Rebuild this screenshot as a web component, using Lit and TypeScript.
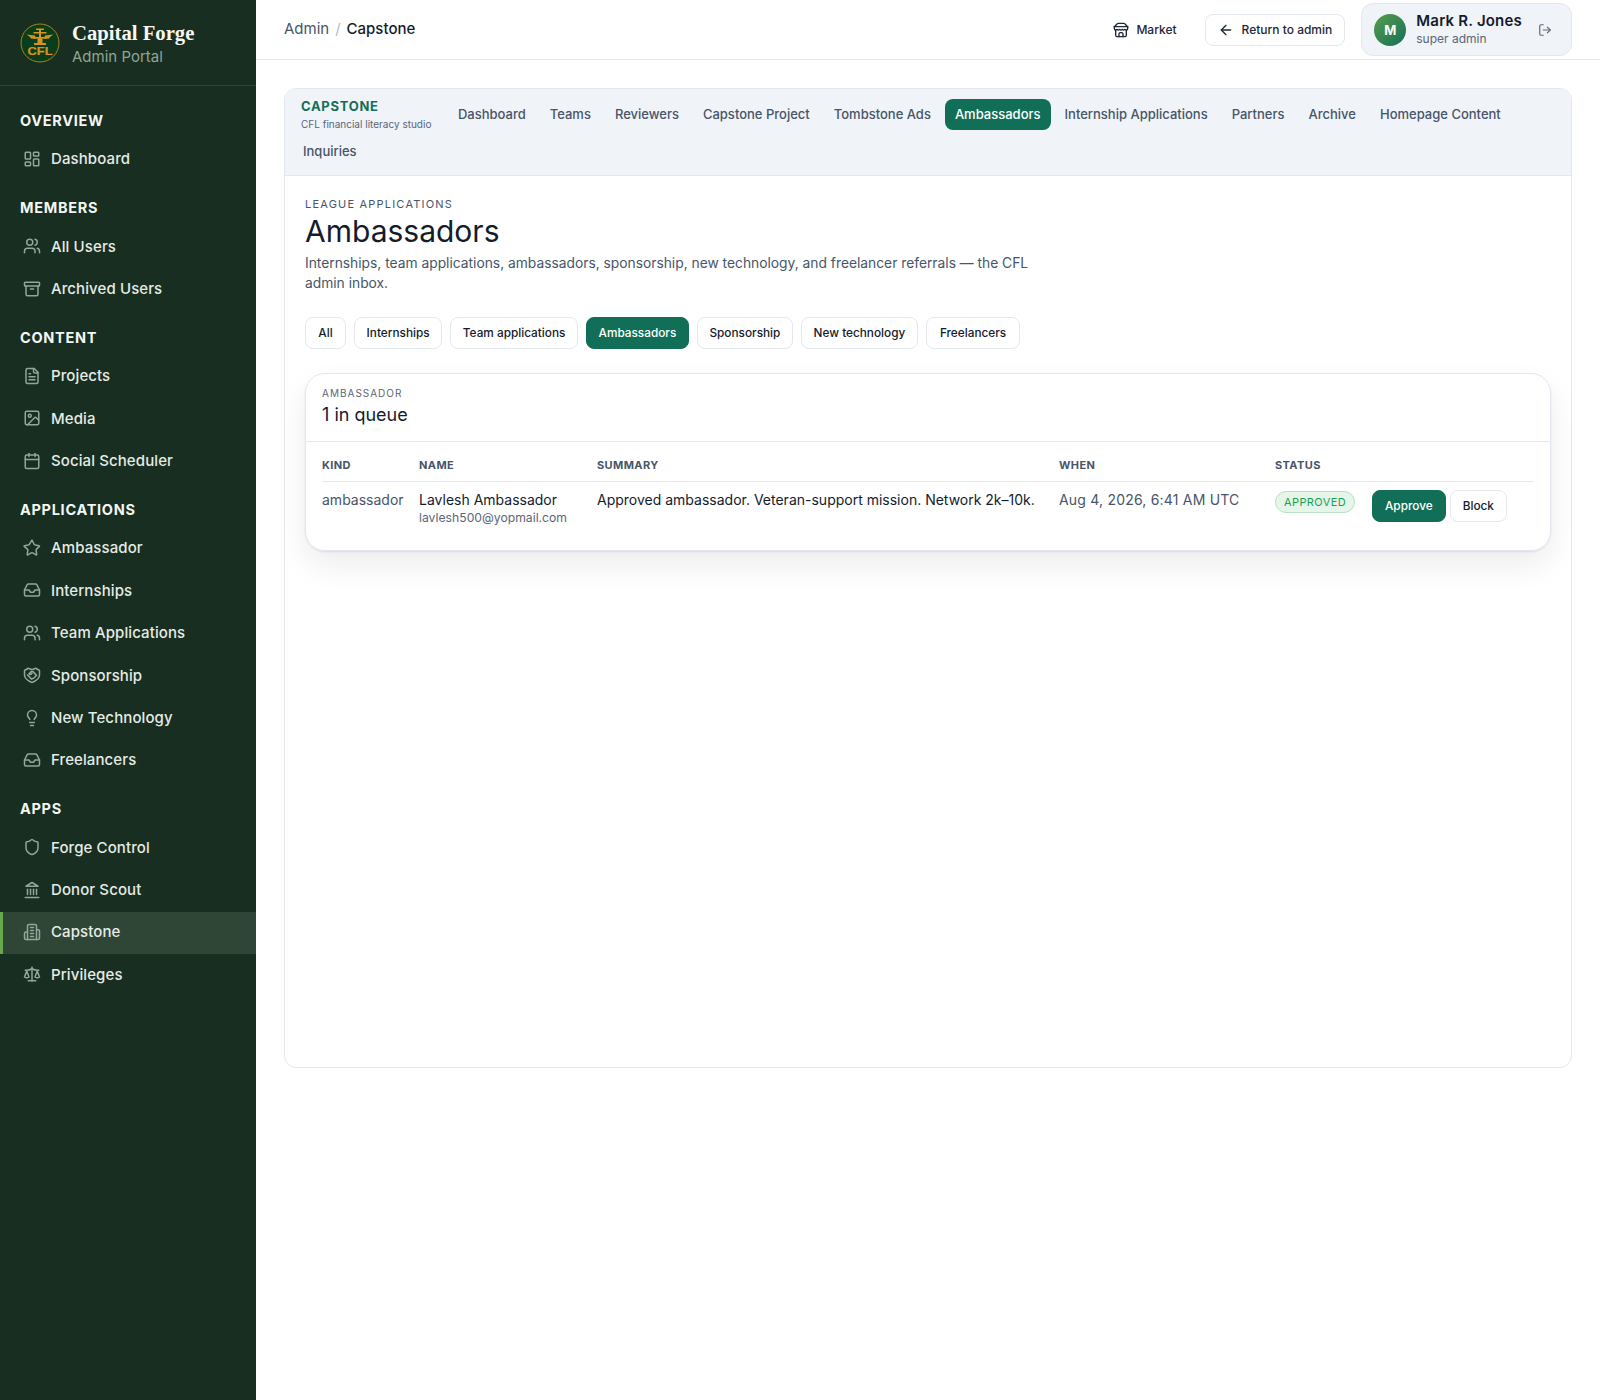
import { css, html, LitElement, svg } from "lit";
import { customElement } from "lit/decorators.js";
import { classMap } from "lit/directives/class-map.js";

const icons: Record<string, ReturnType<typeof svg>> = {
  dashboard: svg`<rect width="7" height="9" x="3" y="3" rx="1"/><rect width="7" height="5" x="14" y="3" rx="1"/><rect width="7" height="9" x="14" y="12" rx="1"/><rect width="7" height="5" x="3" y="16" rx="1"/>`,
  users: svg`<path d="M16 21v-2a4 4 0 0 0-4-4H6a4 4 0 0 0-4 4v2"/><circle cx="9" cy="7" r="4"/><path d="M22 21v-2a4 4 0 0 0-3-3.87"/><path d="M16 3.13a4 4 0 0 1 0 7.75"/>`,
  archive: svg`<rect width="20" height="5" x="2" y="3" rx="1"/><path d="M4 8v11a2 2 0 0 0 2 2h12a2 2 0 0 0 2-2V8"/><path d="M10 12h4"/>`,
  file: svg`<path d="M15 2H6a2 2 0 0 0-2 2v16a2 2 0 0 0 2 2h12a2 2 0 0 0 2-2V7Z"/><path d="M14 2v4a2 2 0 0 0 2 2h4"/><path d="M10 9H8"/><path d="M16 13H8"/><path d="M16 17H8"/>`,
  image: svg`<rect width="18" height="18" x="3" y="3" rx="2"/><circle cx="9" cy="9" r="2"/><path d="m21 15-3.09-3.09a2 2 0 0 0-2.82 0L6 21"/>`,
  calendar: svg`<path d="M8 2v4"/><path d="M16 2v4"/><rect width="18" height="18" x="3" y="4" rx="2"/><path d="M3 10h18"/>`,
  star: svg`<path d="M11.5 2.3a.5.5 0 0 1 1 0l2.3 4.7a2 2 0 0 0 1.5 1.1l5.2.8a.5.5 0 0 1 .3.9l-3.8 3.7a2 2 0 0 0-.6 1.8l.9 5.2a.5.5 0 0 1-.8.6l-4.6-2.5a2 2 0 0 0-1.9 0l-4.6 2.5a.5.5 0 0 1-.8-.6l.9-5.2a2 2 0 0 0-.6-1.8L1.6 9.8a.5.5 0 0 1 .3-.9l5.2-.8a2 2 0 0 0 1.5-1.1z"/>`,
  inbox: svg`<path d="M22 12h-6l-2 3h-4l-2-3H2"/><path d="M5.45 5.11 2 12v6a2 2 0 0 0 2 2h16a2 2 0 0 0 2-2v-6l-3.45-6.89A2 2 0 0 0 16.76 4H7.24a2 2 0 0 0-1.79 1.11z"/>`,
  handshake: svg`<path d="M2 6 7 3l5 2 5-2 5 3v6c0 4.500-4 7.500-10 10C6 19.500 2 16.500 2 12z"/><path d="M11 7.500h2.500l4.500 5-2.500 2.500"/><path d="M11 7.500 8 10.500c1.200 1.200 3 .5 4-.5"/><path d="m6 12 5.500 5.500 3-1.500"/>`,
  bulb: svg`<path d="M15 14c.2-1 .7-1.7 1.5-2.5 1-.9 1.5-2.2 1.5-3.5A6 6 0 0 0 6 8c0 1 .2 2.2 1.5 3.5.7.7 1.3 1.5 1.5 2.5"/><path d="M9 18h6"/><path d="M10 22h4"/>`,
  shield: svg`<path d="M20 13c0 5-3.5 7.5-7.66 8.95a1 1 0 0 1-.67-.01C7.5 20.5 4 18 4 13V6a1 1 0 0 1 1-1c2 0 4.5-1.2 6.24-2.72a1.17 1.17 0 0 1 1.52 0C14.51 3.81 17 5 19 5a1 1 0 0 1 1 1z"/>`,
  landmark: svg`<line x1="3" x2="21" y1="22" y2="22"/><line x1="6" x2="6" y1="18" y2="11"/><line x1="10" x2="10" y1="18" y2="11"/><line x1="14" x2="14" y1="18" y2="11"/><line x1="18" x2="18" y1="18" y2="11"/><polygon points="12 2 20 7 4 7"/>`,
  building: svg`<path d="M6 22V4a2 2 0 0 1 2-2h8a2 2 0 0 1 2 2v18Z"/><path d="M6 12H4a2 2 0 0 0-2 2v6a2 2 0 0 0 2 2h2"/><path d="M18 9h2a2 2 0 0 1 2 2v9a2 2 0 0 1-2 2h-2"/><path d="M10 6h4"/><path d="M10 10h4"/><path d="M10 14h4"/><path d="M10 18h4"/>`,
  scale: svg`<path d="m16 16 3-8 3 8c-.87.65-1.92 1-3 1s-2.13-.35-3-1Z"/><path d="m2 16 3-8 3 8c-.87.65-1.92 1-3 1s-2.13-.35-3-1Z"/><path d="M7 21h10"/><path d="M12 3v18"/><path d="M3 7h2c2 0 5-1 7-2 2 1 5 2 7 2h2"/>`,
  store: svg`<path d="m2 7 4.41-4.41A2 2 0 0 1 7.83 2h8.34a2 2 0 0 1 1.42.59L22 7"/><path d="M4 12v8a2 2 0 0 0 2 2h12a2 2 0 0 0 2-2v-8"/><path d="M15 22v-4a2 2 0 0 0-2-2h-2a2 2 0 0 0-2 2v4"/><path d="M2 7h20"/><path d="M22 7v3a2 2 0 0 1-2 2a2.7 2.7 0 0 1-1.59-.63.7.7 0 0 0-.82 0A2.7 2.7 0 0 1 16 12a2.7 2.7 0 0 1-1.59-.63.7.7 0 0 0-.82 0A2.7 2.7 0 0 1 12 12a2.7 2.7 0 0 1-1.59-.63.7.7 0 0 0-.82 0A2.7 2.7 0 0 1 8 12a2.7 2.7 0 0 1-1.59-.63.7.7 0 0 0-.82 0A2.7 2.7 0 0 1 4 12a2 2 0 0 1-2-2V7"/>`,
  back: svg`<path d="m12 19-7-7 7-7"/><path d="M19 12H5"/>`,
  logout: svg`<path d="M9 21H5a2 2 0 0 1-2-2V5a2 2 0 0 1 2-2h4"/><polyline points="16 17 21 12 16 7"/><line x1="21" x2="9" y1="12" y2="12"/>`,
};

function icon(name: string, size: number) {
  return html`<svg width=${size} height=${size} viewBox="0 0 24 24" fill="none" stroke="currentColor" stroke-width="2" stroke-linecap="round" stroke-linejoin="round">${icons[name]}</svg>`;
}

const navGroups = [
  { title: "OVERVIEW", items: [["dashboard", "Dashboard"]] },
  { title: "MEMBERS", items: [["users", "All Users"], ["archive", "Archived Users"]] },
  { title: "CONTENT", items: [["file", "Projects"], ["image", "Media"], ["calendar", "Social Scheduler"]] },
  {
    title: "APPLICATIONS",
    items: [
      ["star", "Ambassador"],
      ["inbox", "Internships"],
      ["users", "Team Applications"],
      ["handshake", "Sponsorship"],
      ["bulb", "New Technology"],
      ["inbox", "Freelancers"],
    ],
  },
  {
    title: "APPS",
    items: [["shield", "Forge Control"], ["landmark", "Donor Scout"], ["building", "Capstone"], ["scale", "Privileges"]],
  },
];

const tabs = [
  "Dashboard",
  "Teams",
  "Reviewers",
  "Capstone Project",
  "Tombstone Ads",
  "Ambassadors",
  "Internship Applications",
  "Partners",
  "Archive",
  "Homepage Content",
  "Inquiries",
];

const filters = ["All", "Internships", "Team applications", "Ambassadors", "Sponsorship", "New technology", "Freelancers"];

@customElement("app-root")
export class AppRoot extends LitElement {
  renderLogo() {
    return html`<svg class="logo" width="40" height="40" viewBox="0 0 40 40">
      <circle cx="20" cy="20" r="19" fill="#0a3d1c" stroke="#a8841f" stroke-width="1"/>
      <g fill="#d9921c">
        <path d="M6.500 11.500 15 12.500 16 16 11 15.500 9.500 13.500Z"/>
        <path d="M33.500 11.500 25 12.500 24 16 29 15.500 30.500 13.500Z"/>
        <rect x="16" y="5.500" width="8" height="1.500"/>
        <rect x="13.500" y="9" width="13" height="1.500"/>
        <path d="M15 14h10v1.500h-2.500V20H26v2H14v-2h3.500v-4.500H15Z"/>
        <rect x="19" y="7" width="2" height="7"/>
      </g>
      <text x="20" y="31.500" text-anchor="middle" textLength="25" lengthAdjust="spacingAndGlyphs" class="logo-text">CFL</text>
    </svg>`;
  }

  renderSidebar() {
    return html`<aside class="sidebar">
      <div class="brand">
        ${this.renderLogo()}
        <div class="brand-text">
          <div class="brand-name">Capital Forge</div>
          <div class="brand-sub">Admin Portal</div>
        </div>
      </div>
      <nav class="nav">
        ${navGroups.map(
          (g) => html`<div class="group">
            <div class="group-title">${g.title}</div>
            ${g.items.map(
              ([ic, label]) => html`<div class=${classMap({ item: true, active: label === "Capstone" })}>
                <span class="item-icon">${icon(ic, 18)}</span>${label}
              </div>`
            )}
          </div>`
        )}
      </nav>
    </aside>`;
  }

  renderTopbar() {
    return html`<header class="topbar">
      <div class="crumbs"><span>Admin</span><span class="sep">/</span><span class="current">Capstone</span></div>
      <div class="top-actions">
        <span class="market">${icon("store", 16)}Market</span>
        <span class="return">${icon("back", 16)}Return to admin</span>
        <div class="user">
          <span class="avatar">M</span>
          <div class="user-text">
            <div class="user-name">Mark R. Jones</div>
            <div class="user-role">super admin</div>
          </div>
          <span class="logout">${icon("logout", 14)}</span>
        </div>
      </div>
    </header>`;
  }

  renderTable() {
    return html`<table>
      <colgroup>
        <col class="c-kind" /><col class="c-name" /><col class="c-summary" /><col class="c-when" /><col class="c-status" /><col />
      </colgroup>
      <thead>
        <tr><th>KIND</th><th>NAME</th><th>SUMMARY</th><th>WHEN</th><th>STATUS</th><th></th></tr>
      </thead>
      <tbody>
        <tr>
          <td class="muted">ambassador</td>
          <td>Lavlesh Ambassador<div class="email">lavlesh500@yopmail.com</div></td>
          <td>Approved ambassador. Veteran-support mission. Network 2k–10k.</td>
          <td class="muted when">Aug 4, 2026, 6:41 AM UTC</td>
          <td class="status"><span class="badge">APPROVED</span></td>
          <td class="row-actions"><span class="btn primary">Approve</span><span class="btn">Block</span></td>
        </tr>
      </tbody>
    </table>`;
  }

  render() {
    return html`<div class="shell">
      ${this.renderSidebar()}
      <div class="main">
        ${this.renderTopbar()}
        <main class="content">
          <section class="panel">
            <div class="tabs">
              <div class="tabs-brand">
                <div class="tabs-title">CAPSTONE</div>
                <div class="tabs-sub">CFL financial literacy studio</div>
              </div>
              ${tabs.map((t) => html`<span class=${classMap({ tab: true, on: t === "Ambassadors" })}>${t}</span>`)}
            </div>
            <div class="body">
              <div class="eyebrow">LEAGUE APPLICATIONS</div>
              <h1>Ambassadors</h1>
              <p class="lede">Internships, team applications, ambassadors, sponsorship, new technology, and freelancer referrals — the CFL admin inbox.</p>
              <div class="filters">
                ${filters.map((f) => html`<span class=${classMap({ btn: true, filter: true, primary: f === "Ambassadors" })}>${f}</span>`)}
              </div>
              <div class="card">
                <div class="card-head">
                  <div class="card-eyebrow">AMBASSADOR</div>
                  <div class="card-title">1 in queue</div>
                </div>
                <div class="table-wrap">${this.renderTable()}</div>
              </div>
            </div>
          </section>
        </main>
      </div>
    </div>`;
  }

  static styles = css`
    :host {
      display: block;
      font-family: Inter, "Liberation Sans", sans-serif;
      color: #141b2d;
    }

    .shell {
      display: flex;
      min-height: 1400px;
    }

    .sidebar {
      width: 256px;
      flex: none;
      background: #172e20;
      color: #f1f5f1;
    }

    .brand {
      display: flex;
      align-items: center;
      gap: 12px;
      height: 86px;
      box-sizing: border-box;
      padding: 0 20px;
      border-bottom: 1px solid #2c4535;
    }

    .logo {
      flex: none;
    }

    .logo-text {
      font: 700 10px "Liberation Sans", sans-serif;
      fill: #d9921c;
      stroke: #d9921c;
      stroke-width: 0.2px;
    }

    .brand-text {
      margin-top: 2px;
    }

    .brand-name {
      font: 700 20.700px/24px "Liberation Serif", serif;
      color: #f6f7f4;
    }

    .brand-sub {
      font-size: 15px;
      line-height: 20px;
      color: #8fa596;
      margin-top: 2px;
    }

    .nav {
      padding-top: 15px;
    }

    .group {
      margin-bottom: 7.400px;
    }

    .group-title {
      padding: 10px 20px 7.500px;
      font-size: 14.500px;
      line-height: 20px;
      font-weight: 700;
      letter-spacing: 0.7px;
      color: #f4f6f3;
    }

    .item {
      display: flex;
      align-items: center;
      gap: 10px;
      height: 42.400px;
      box-sizing: border-box;
      padding: 0 20px 1.500px 23px;
      font-size: 15px;
      font-weight: 500;
      letter-spacing: 0.1px;
      color: #e6ebe6;
    }

    .item-icon {
      display: flex;
      color: #93a699;
    }

    .item.active {
      background: #2f4636;
      box-shadow: inset 3px 0 0 #6aa84f;
    }

    .main {
      flex: 1;
      min-width: 0;
    }

    .topbar {
      display: flex;
      align-items: center;
      justify-content: space-between;
      height: 60px;
      box-sizing: border-box;
      padding: 0 28px;
      border-bottom: 1px solid #e3e8f0;
    }

    .crumbs {
      display: flex;
      gap: 6px;
      margin-top: -2px;
      font-size: 15px;
      color: #475569;
    }

    .sep {
      color: #b4bcc8;
    }

    .current {
      color: #141b2d;
      font-weight: 500;
    }

    .top-actions {
      display: flex;
      align-items: center;
      gap: 16px;
    }

    .market,
    .return {
      display: inline-flex;
      align-items: center;
      gap: 8px;
      font-size: 12px;
      font-weight: 500;
      height: 32px;
      box-sizing: border-box;
      color: #1e2638;
      padding: 0 12px;
    }

    .market {
      gap: 7px;
    }

    .return {
      border: 1px solid #e3e8f0;
      border-radius: 8px;
    }

    .user {
      display: flex;
      align-items: center;
      gap: 10px;
      height: 53px;
      box-sizing: border-box;
      padding: 0 19px 0 12px;
      background: #f0f3f8;
      border: 1px solid #e3e8f0;
      border-radius: 12px;
    }

    .avatar {
      display: flex;
      align-items: center;
      justify-content: center;
      width: 32px;
      height: 32px;
      border-radius: 50%;
      color: #fff;
      font-size: 13px;
      font-weight: 700;
      background: linear-gradient(135deg, #5a9e4b, #136f57);
    }

    .user-text {
      margin-top: -2px;
    }

    .user-name {
      font-size: 15px;
      line-height: 20px;
      font-weight: 600;
      letter-spacing: 0.2px;
    }

    .user-role {
      font-size: 12px;
      line-height: 16px;
      color: #5a6679;
    }

    .logout {
      display: flex;
      margin-left: 6px;
      color: #5a6679;
    }

    .content {
      padding: 28px;
    }

    .panel {
      min-height: 980px;
      box-sizing: border-box;
      border: 1px solid #e3e8f0;
      border-radius: 12px;
      overflow: hidden;
    }

    .tabs {
      display: flex;
      flex-wrap: wrap;
      align-items: center;
      gap: 6px 4px;
      padding: 10px 8px 8px;
      background: #f0f3f8;
      border-bottom: 1px solid #e3e8f0;
    }

    .tabs-brand {
      margin-right: 12.500px;
      padding-left: 8px;
    }

    .tabs-title {
      font-size: 13px;
      line-height: 15px;
      font-weight: 700;
      letter-spacing: 0.7px;
      color: #126f57;
    }

    .tabs-sub {
      font-size: 10px;
      line-height: 13px;
      margin-top: 4px;
      margin-bottom: -1px;
      color: #5a6679;
    }

    .tab {
      padding: 0 10px 2px;
      height: 31px;
      box-sizing: border-box;
      display: inline-flex;
      align-items: center;
      border-radius: 8px;
      font-size: 13px;
      font-weight: 500;
      color: #475569;
    }

    .tab.on {
      background: #126f57;
      color: #fff;
    }

    .body {
      padding: 20px;
    }

    .eyebrow {
      font-size: 11px;
      line-height: 16px;
      letter-spacing: 1.200px;
      color: #475569;
    }

    h1 {
      margin: 1px 0 0;
      font-size: 30px;
      line-height: 36px;
      font-weight: 400;
      color: #141b2d;
    }

    .lede {
      margin: 4px 0 0;
      max-width: 760px;
      font-size: 13.800px;
      line-height: 20px;
      color: #475569;
    }

    .filters {
      display: flex;
      gap: 8px;
      margin-top: 24px;
    }

    .btn {
      display: inline-flex;
      align-items: center;
      justify-content: center;
      height: 32px;
      box-sizing: border-box;
      padding: 0 11.600px 1px;
      border: 1px solid #e3e8f0;
      border-radius: 8px;
      font-size: 11.800px;
      font-weight: 500;
      background: #fff;
      color: #141b2d;
    }

    .filter:first-child {
      min-width: 41px;
    }

    .filter:last-child {
      padding: 0 13px 1px;
    }

    .btn.primary {
      background: #126f57;
      border-color: #126f57;
      color: #fff;
    }

    .card {
      margin-top: 24px;
      border: 1px solid #e3e8f0;
      border-radius: 20px;
      box-shadow: 0 14px 30px rgba(20, 27, 45, 0.08), 0 1px 2px rgba(20, 27, 45, 0.1);
    }

    .card-head {
      padding: 12px 16px 13px;
      border-bottom: 1px solid #e3e8f0;
    }

    .card-eyebrow {
      font-size: 10px;
      line-height: 14px;
      letter-spacing: 1px;
      color: #5a6679;
    }

    .card-title {
      margin-top: 2px;
      font-size: 18px;
      line-height: 26px;
    }

    .table-wrap {
      padding: 8px 16px 24px;
    }

    table {
      width: 100%;
      table-layout: fixed;
      border-collapse: collapse;
    }

    .c-kind {
      width: 97px;
    }

    .c-name {
      width: 178px;
    }

    .c-summary {
      width: 462px;
    }

    .c-when {
      width: 216px;
    }

    .c-status {
      width: 97px;
    }

    th {
      height: 31px;
      padding: 0 0 1px;
      box-sizing: border-box;
      text-align: left;
      font-size: 11px;
      font-weight: 700;
      letter-spacing: 0.4px;
      color: #475569;
      border-bottom: 1px solid #e3e8f0;
    }

    td {
      padding: 8px 0 0;
      vertical-align: top;
      font-size: 14px;
      line-height: 20px;
    }

    td.muted {
      color: #475569;
    }

    td.when {
      letter-spacing: 0.2px;
    }

    td.status {
      padding-top: 9px;
    }

    .email {
      font-size: 12.200px;
      line-height: 16px;
      color: #5a6679;
    }

    .badge {
      display: inline-flex;
      align-items: center;
      height: 22px;
      box-sizing: border-box;
      padding: 0 8px 1px;
      border: 1px solid #b7e2c5;
      border-radius: 11px;
      background: #e6f5ea;
      color: #16a34a;
      font-size: 11px;
      letter-spacing: 0.4px;
    }

    .row-actions {
      padding-top: 8px;
      white-space: nowrap;
    }

    .row-actions .btn {
      padding: 0 12px;
      margin-right: 4px;
    }
  `;
}

declare global {
  interface HTMLElementTagNameMap {
    "app-root": AppRoot;
  }
}
